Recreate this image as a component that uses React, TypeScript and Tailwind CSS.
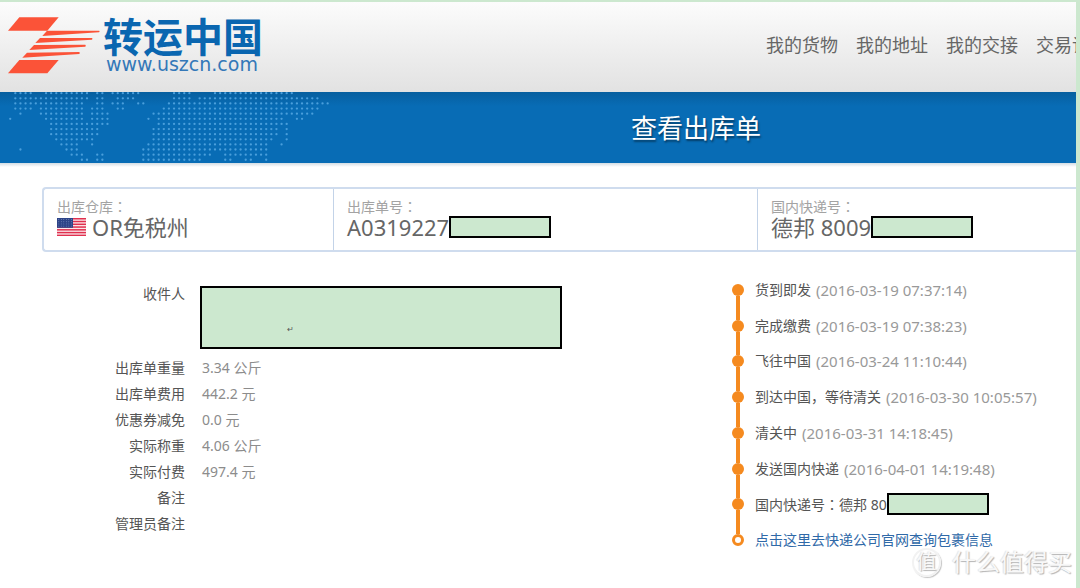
import React from "react";

const navItems = ["我的货物", "我的地址", "我的交接", "交易记录"];

/* Each row lists inclusive column ranges of dots in the world map. */
const mapRows: number[][][] = [
  [[1, 4], [7, 15], [17, 18], [20, 25], [32, 35], [40, 55]],
  [[1, 15], [17, 18], [21, 24], [32, 35], [37, 60]],
  [[1, 14], [17, 18], [20, 22], [25, 26], [31, 62]],
  [[1, 4], [6, 14], [16, 18], [21, 22], [30, 60]],
  [[2, 2], [6, 14], [16, 19], [28, 59]],
  [[0, 0], [7, 14], [16, 19], [27, 27], [29, 53], [56, 57]],
  [[8, 19], [29, 54]],
  [[8, 17], [28, 52], [54, 54]],
  [[8, 17], [28, 52], [54, 54]],
  [[9, 16], [28, 51], [54, 54]],
  [[10, 13], [16, 16], [27, 50], [53, 53]],
  [[2, 2], [11, 13], [26, 50]],
  [[12, 14], [17, 18], [26, 39], [42, 50]],
  [[14, 15], [17, 18], [26, 37], [42, 43], [46, 47], [50, 50]],
];

const details = [
  { label: "出库单重量", value: "3.34 公斤" },
  { label: "出库单费用", value: "442.2 元" },
  { label: "优惠券减免", value: "0.0 元" },
  { label: "实际称重", value: "4.06 公斤" },
  { label: "实际付费", value: "497.4 元" },
  { label: "备注", value: "" },
  { label: "管理员备注", value: "" },
];

const events = [
  { text: "货到即发", time: "(2016-03-19 07:37:14)" },
  { text: "完成缴费", time: "(2016-03-19 07:38:23)" },
  { text: "飞往中国", time: "(2016-03-24 11:10:44)" },
  { text: "到达中国，等待清关", time: "(2016-03-30 10:05:57)" },
  { text: "清关中", time: "(2016-03-31 14:18:45)" },
  { text: "发送国内快递", time: "(2016-04-01 14:19:48)" },
];

/* Sets the full-width colon in the face that centres it in its cell. */
function Centred({ text }: { text: string }) {
  return (
    <span>
      {text.split(/(：)/).map((part, i) =>
        i % 2 === 1 ? (
          <span key={i} lang="zh-TW" className="font-['Noto_Sans_CJK_TC',sans-serif]">
            {part}
          </span>
        ) : (
          part
        )
      )}
    </span>
  );
}

function LogoMark() {
  return (
    <svg viewBox="24 20 276 171" className="h-[57px] w-[92px] shrink-0" fill="#fb5338" aria-hidden="true">
      <path d="M58 21H176L142 61H24Z" />
      <path d="M141 61L298 61Q300 64 297 66L127 77Z" />
      <path d="M120 83L276 83Q279 85 276 88L106 98Z" />
      <path d="M102 104L256 103Q259 106 256 109L88 119Z" />
      <path d="M81 127L238 125Q241 128 238 131L67 142Z" />
      <path d="M58 149H176L142 189H24Z" />
    </svg>
  );
}

function WorldMap() {
  return (
    <svg viewBox="0 0 332 71" className="absolute top-0 left-0 h-[71px] w-[332px]" fill="#4a9fdc" aria-hidden="true">
      {mapRows.map((ranges, r) =>
        ranges.map(([a, b]) =>
          Array.from({ length: b - a + 1 }, (_, i) => (
            <circle key={`${r}-${a + i}`} cx={10.2 + (a + i) * 5.12} cy={1.2 + r * 5.12} r="1.15" />
          ))
        )
      )}
    </svg>
  );
}

function UsFlag() {
  return (
    <svg viewBox="0 0 29 18" className="h-[18px] w-[29px] shrink-0" role="img" aria-label="US">
      <rect width="29" height="18" fill="#fbe9ec" />
      {[0, 1, 2, 3, 4, 5, 6].map((i) => (
        <rect key={i} y={i * 2.77} width="29" height="1.5" fill="#e0304f" />
      ))}
      <rect width="16" height="9.8" fill="#2d4488" />
      {[0, 1, 2, 3].map((r) =>
        [0, 1, 2, 3, 4, 5].map((c) => (
          <circle key={`${r}-${c}`} cx={1.8 + c * 2.5} cy={1.5 + r * 2.2} r="0.45" fill="#9fb0da" />
        ))
      )}
    </svg>
  );
}

function Redacted() {
  return <span className="h-[22px] w-[102px] shrink-0 border-2 border-black bg-[#cce8cf]" />;
}

function SummaryCell({ label, children }: { label: string; children: React.ReactNode }) {
  return (
    <div className="border-l border-[#c3d3e8] pt-2 pb-3 pl-[13px] first:border-l-0">
      <div className="text-sm leading-[18px] text-[#a3a3a3]">
        <Centred text={label} />
      </div>
      <div className="flex h-[22px] items-center text-[22px] leading-[22px] text-[#666]">{children}</div>
    </div>
  );
}

function Step({ first, last, children }: { first?: boolean; last?: boolean; children: React.ReactNode }) {
  return (
    <li className="flex flex-1 gap-[11px]">
      <span className="flex w-3 flex-col items-center">
        <span className={first ? "w-1 flex-1" : "w-1 flex-1 bg-[#f58a1f]"} />
        <span
          className={
            last
              ? "size-3 rounded-full border-[3px] border-[#f58a1f] bg-white"
              : "size-3 rounded-full bg-[#f58a1f]"
          }
        />
        <span className={last ? "w-1 flex-1" : "w-1 flex-1 bg-[#f58a1f]"} />
      </span>
      <span className="flex items-center self-center">{children}</span>
    </li>
  );
}

export default function App() {
  return (
    <div className="min-h-screen bg-[#cce8cf] pt-[2px] pr-1 font-['Noto_Sans','Noto_Sans_CJK_SC',sans-serif] whitespace-nowrap">
      <div className="relative min-h-[586px] overflow-hidden bg-white">
        <header className="flex h-[90px] items-center justify-between bg-linear-to-b from-[#fcfcfc] to-[#e2e2e2] pb-1 pl-2">
          <a href="#home" className="flex items-center gap-[3px]">
            <LogoMark />
            <span className="flex flex-col">
              <span className="font-['Noto_Sans_CJK_SC',sans-serif] text-[40px] leading-[38px] font-bold text-[#0a66b0]">
                转运中国
              </span>
              <span className="pl-[3px] font-['DejaVu_Sans',sans-serif] text-[19px] leading-5 text-[#3478b8]">
                www.uszcn.com
              </span>
            </span>
          </a>
          <nav className="flex w-[310px] gap-[18px] overflow-hidden text-lg leading-6 text-[#666]">
            {navItems.map((item) => (
              <a key={item} href="#nav" className="shrink-0">
                {item}
              </a>
            ))}
          </nav>
        </header>

        <div className="relative flex h-[71px] items-center justify-center bg-linear-to-b from-[#075f9f] via-[#086cb5] via-20% to-[#086cb5] pl-[316px]">
          <WorldMap />
          <h1 className="text-[26px] leading-8 text-white [text-shadow:1px_2px_2px_rgba(0,0,0,0.45)]">查看出库单</h1>
        </div>
        <div className="h-1 bg-linear-to-b from-[#d3dde4] to-white" />

        <main className="pt-5 pl-[42px]">
          <section className="grid grid-cols-[289fr_424fr_319fr] rounded-l-[4px] border-2 border-r-0 border-[#cfdcee]">
            <SummaryCell label="出库仓库：">
              <UsFlag />
              <span className="pl-[6px]">OR免税州</span>
            </SummaryCell>
            <SummaryCell label="出库单号：">
              A0319227
              <Redacted />
            </SummaryCell>
            <SummaryCell label="国内快递号：">
              德邦 8009
              <Redacted />
            </SummaryCell>
          </section>

          <div className="grid grid-cols-[690fr_344fr] text-sm">
            <dl className="grid grid-cols-[143px_1fr] content-start gap-x-[15px] pt-[29px] leading-[26px]">
              <dt className="text-right text-[#555]">收件人</dt>
              <dd className="mt-[5px] mb-[6px] h-[63px] w-[362px] border-2 border-black bg-[#cce8cf] pt-[28px] pl-[85px] text-[8px] text-[#555]">
                ↵
              </dd>
              {details.map(({ label, value }) => (
                <React.Fragment key={label}>
                  <dt className="text-right text-[#555]">{label}</dt>
                  <dd className="pl-[2px] text-[#8c8c8c]">{value}</dd>
                </React.Fragment>
              ))}
            </dl>

            <ol className="mt-5 flex h-[286px] flex-col leading-6 text-[#555]">
              {events.map(({ text, time }, i) => (
                <Step key={text} first={i === 0}>
                  {text}
                  <span className="pl-[5px] text-[15px] text-[#999]">{time}</span>
                </Step>
              ))}
              <Step>
                <Centred text="国内快递号：德邦 80" />
                <Redacted />
              </Step>
              <Step last>
                <a href="#track" className="text-[#2f69a8]">
                  点击这里去快递公司官网查询包裹信息
                </a>
              </Step>
            </ol>
          </div>
        </main>

        <div className="absolute right-1 bottom-[10px] flex items-center gap-[11px] text-2xl leading-8 text-[#f8f8f8] [text-shadow:1px_1px_1px_#b4b4b4,-1px_0_1px_#e4e4e4]">
          <span className="flex size-[29px] items-center justify-center rounded-full border-2 border-[#f2f2f2] text-xl shadow-[1px_1px_1px_#c4c4c4]">
            值
          </span>
          什么值得买
        </div>
      </div>
    </div>
  );
}
